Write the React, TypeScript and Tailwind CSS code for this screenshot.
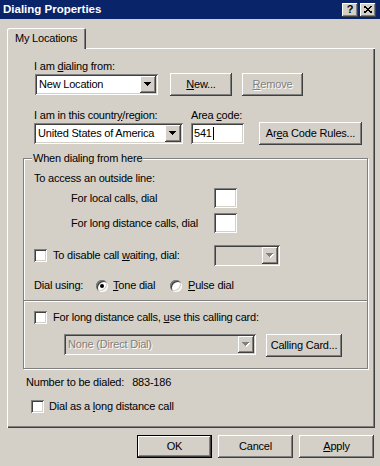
import React from "react";

const sunken =
  "shadow-[inset_1px_1px_0_#808080,inset_-1px_-1px_0_#ffffff,inset_2px_2px_0_#404040,inset_-2px_-2px_0_#d4d0c8]";
const raised =
  "shadow-[inset_-1px_-1px_0_#404040,inset_1px_1px_0_#ffffff,inset_-2px_-2px_0_#808080,inset_2px_2px_0_#d4d0c8]";
const grayText = "text-[#808080] [text-shadow:1px_1px_0_#ffffff]";

function Arrow({ disabled }: { disabled?: boolean }) {
  const tri = "M0 0h7v1h-1v1h-1v1h-1v1h-1v-1h-1v-1h-1v-1h-1z";
  return (
    <div className={`flex h-full w-[16px] shrink-0 items-center justify-center bg-[#d4d0c8] ${raised}`}>
      <svg width="8" height="5" viewBox="0 0 8 5" shapeRendering="crispEdges">
        {disabled && <path d={tri} fill="#ffffff" transform="translate(1 1)" />}
        <path d={tri} fill={disabled ? "#808080" : "#000000"} />
      </svg>
    </div>
  );
}

function Combo({ className, text, disabled }: { className: string; text?: string; disabled?: boolean }) {
  return (
    <div
      className={`flex h-[21px] shrink-0 items-stretch p-[2px] ${sunken} ${disabled ? "bg-[#d4d0c8]" : "bg-white"} ${className}`}
    >
      <span className={`flex-1 truncate pl-[2px] leading-[17px] ${disabled ? grayText : ""}`}>{text}</span>
      <Arrow disabled={disabled} />
    </div>
  );
}

function Btn({
  className,
  children,
  isDefault,
  disabled,
}: {
  className: string;
  children: React.ReactNode;
  isDefault?: boolean;
  disabled?: boolean;
}) {
  return (
    <div
      className={`flex h-[23px] shrink-0 items-center justify-center bg-[#d4d0c8] ${raised} ${
        isDefault ? "border border-black" : ""
      } ${disabled ? grayText : ""} ${className}`}
    >
      {children}
    </div>
  );
}

function Check() {
  return <div className={`h-[13px] w-[13px] shrink-0 bg-white ${sunken}`} />;
}

function Radio({ checked }: { checked?: boolean }) {
  return (
    <div className={`flex h-[12px] w-[12px] shrink-0 items-center justify-center rounded-full bg-white ${sunken}`}>
      {checked && <div className="h-[4px] w-[4px] rounded-full bg-black" />}
    </div>
  );
}

function TextBox({ className, children }: { className: string; children?: React.ReactNode }) {
  return (
    <div className={`flex h-[20px] shrink-0 items-center bg-white pl-[3px] ${sunken} ${className}`}>{children}</div>
  );
}

export default function App() {
  return (
    <div className="flex h-[466px] w-[380px] flex-col overflow-hidden bg-[#d4d0c8] font-['Liberation_Sans',Arial,sans-serif] text-[11px] leading-[13px] tracking-[-0.2px] text-black">
      {/* title bar */}
      <div className="flex h-[19px] shrink-0 items-center justify-between bg-[#0a246a] pl-[3px] pr-[4px]">
        <span className="text-[11.5px] font-bold tracking-normal text-white">Dialing Properties</span>
        <div className="flex gap-[2px]">
          <div className={`flex h-[14px] w-[16px] items-center justify-center bg-[#d4d0c8] text-[11px] font-bold ${raised}`}>
            ?
          </div>
          <div className={`flex h-[14px] w-[16px] items-center justify-center bg-[#d4d0c8] ${raised}`}>
            <svg width="8" height="7" viewBox="0 0 8 7" shapeRendering="crispEdges">
              <path d="M0 0L8 7M8 0L0 7" stroke="#000" strokeWidth="1.6" />
            </svg>
          </div>
        </div>
      </div>

      {/* tab */}
      <div className="ml-[7px] mt-[9px] flex">
        <div className="relative z-10 flex h-[21px] w-[79px] items-center rounded-t-[2px] bg-[#d4d0c8] pl-[8px] shadow-[inset_1px_1px_0_#ffffff,inset_-1px_0_0_#404040,inset_-2px_0_0_#808080]">
          My Locations
        </div>
      </div>

      {/* panel */}
      <div className="-mt-[1px] ml-[7px] flex h-[380px] w-[368px] shrink-0 flex-col shadow-[inset_1px_1px_0_#ffffff,inset_-1px_-1px_0_#404040,inset_-2px_-2px_0_#808080]">
        <div className="pl-[27px] pt-[12px]">
          <div>
            I am <u>d</u>ialing from:
          </div>
          <div className="flex h-[23px] items-center">
            <Combo className="ml-[1px] w-[123px]" text="New Location" />
            <Btn className="ml-[12px] w-[62px]">
              <span>
                <u>N</u>ew...
              </span>
            </Btn>
            <Btn className="ml-[10px] w-[61px]" disabled>
              <span>
                <u>R</u>emove
              </span>
            </Btn>
          </div>

          <div className="mt-[13px] flex">
            <div className="w-[157px]">
              I am in this countr<u>y</u>/region:
            </div>
            <div>
              Area <u>c</u>ode:
            </div>
          </div>
          <div className="flex h-[23px] items-center">
            <Combo className="w-[149px]" text="United States of America" />
            <TextBox className="ml-[8px] h-[21px] w-[53px]">
              <span>541</span>
              <span className="ml-[1px] h-[13px] w-[1px] bg-black" />
            </TextBox>
            <Btn className="ml-[15px] w-[103px]">
              <span>
                Ar<u>e</u>a Code Rules...
              </span>
            </Btn>
          </div>
        </div>

        {/* group box */}
        <div className="relative ml-[16px] mt-[13px] w-[345px] border border-[#808080] shadow-[inset_1px_1px_0_#ffffff,1px_1px_0_#ffffff]">
          <span className="absolute -top-[7px] left-[8px] bg-[#d4d0c8] px-[1px]">When dialing from here</span>
          <div className="pl-[10px] pt-[13px]">
            <div>To access an outside line:</div>
            <div className="mt-[3px] flex h-[20px] items-center">
              <span className="ml-[37px] w-[143px]">For local calls, dial</span>
              <TextBox className="w-[23px]" />
            </div>
            <div className="mt-[5px] flex h-[20px] items-center">
              <span className="ml-[37px] w-[143px]">For long distance calls, dial</span>
              <TextBox className="w-[23px]" />
            </div>
            <div className="mt-[12px] flex h-[21px] items-center">
              <Check />
              <span className="ml-[6px] w-[161px]">
                To disable call <u>w</u>aiting, dial:
              </span>
              <Combo className="w-[66px]" disabled />
            </div>
            <div className="mt-[13px] flex h-[13px] items-center">
              <span className="w-[62px]">Dial using:</span>
              <Radio checked />
              <span className="ml-[5px] w-[57px]">
                <u>T</u>one dial
              </span>
              <Radio />
              <span className="ml-[6px]">
                <u>P</u>ulse dial
              </span>
            </div>
          </div>
          <div className="mt-[8px] h-[2px] border-t border-b border-t-[#808080] border-b-white" />
          <div className="pb-[11px] pl-[10px] pt-[9px]">
            <div className="flex h-[13px] items-center">
              <Check />
              <span className="ml-[6px]">
                For long distance calls, <u>u</u>se this calling card:
              </span>
            </div>
            <div className="mt-[10px] flex h-[23px] items-start">
              <Combo className="ml-[30px] w-[192px]" text="None (Direct Dial)" disabled />
              <Btn className="ml-[10px] w-[76px]">Calling Card...</Btn>
            </div>
          </div>
        </div>

        <div className="ml-[19px] mt-[7px]">
          Number to be dialed:<span className="ml-[8px]">883-186</span>
        </div>
        <div className="ml-[24px] mt-[11px] flex h-[13px] items-center">
          <Check />
          <span className="ml-[5px]">
            Dial as a <u>l</u>ong distance call
          </span>
        </div>
      </div>

      {/* dialog buttons */}
      <div className="mt-[7px] flex justify-end gap-[6px] pr-[6px]">
        <Btn className="w-[75px]" isDefault>
          OK
        </Btn>
        <Btn className="w-[75px]">Cancel</Btn>
        <Btn className="w-[75px]">
          <span>
            <u>A</u>pply
          </span>
        </Btn>
      </div>
    </div>
  );
}
